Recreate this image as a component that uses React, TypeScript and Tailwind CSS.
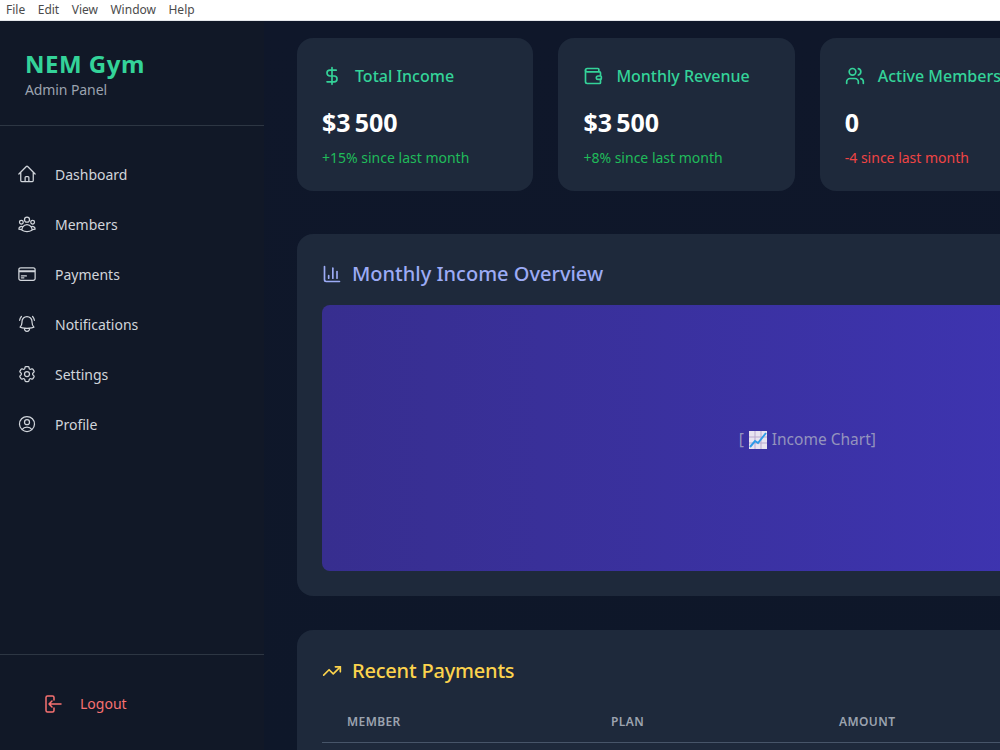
import React from 'react';
import { ChartColumn, DollarSign, TrendingUp, Users, Wallet } from 'lucide-react';
import {
  HiOutlineBellAlert,
  HiOutlineCog6Tooth,
  HiOutlineCreditCard,
  HiOutlineHome,
  HiOutlineUserCircle,
  HiOutlineUserGroup,
} from 'react-icons/hi2';

const menu = ['File', 'Edit', 'View', 'Window', 'Help'];

const nav = [
  { label: 'Dashboard', icon: HiOutlineHome },
  { label: 'Members', icon: HiOutlineUserGroup },
  { label: 'Payments', icon: HiOutlineCreditCard },
  { label: 'Notifications', icon: HiOutlineBellAlert },
  { label: 'Settings', icon: HiOutlineCog6Tooth },
  { label: 'Profile', icon: HiOutlineUserCircle },
];

const stats = [
  { title: 'Total Income', value: '$3\u202F500', note: '+15% since last month', icon: DollarSign, up: true },
  { title: 'Monthly Revenue', value: '$3\u202F500', note: '+8% since last month', icon: Wallet, up: true },
  { title: 'Active Members', value: '0', note: '-4 since last month', icon: Users, up: false },
];

// the chart emoji, no emoji font on the page
const ChartEmoji = () => (
  <svg viewBox="0 0 18 18" className="w-[18px] h-[18px] mx-[5px] shrink-0">
    <rect x="0" y="0" width="18" height="18" fill="#e8e3f0" />
    <path d="M0 6h18M0 12h18M6 0v18M12 0v18" stroke="#b9a9cf" strokeWidth="1" />
    <path d="M1 16L6 10l3 2 8-10" fill="none" stroke="#2f9be8" strokeWidth="2" />
  </svg>
);

const LogoutIcon = () => (
  <svg viewBox="0 0 17 18" fill="none" stroke="currentColor" strokeWidth="1.5" strokeLinecap="round" strokeLinejoin="round" className="w-[17px] h-[18px]">
    <path d="M9 5V2.5A1.5 1.5 0 0 0 7.5 1h-5A1.5 1.5 0 0 0 1 2.5v13A1.5 1.5 0 0 0 2.5 17h5A1.5 1.5 0 0 0 9 15.5V13" />
    <path d="M16 9H4M7 6L4 9l3 3" />
  </svg>
);

export default function App() {
  return (
    <div className="h-screen flex flex-col overflow-hidden font-['Noto_Sans','Open_Sans',sans-serif]">
      <div className="h-[21px] shrink-0 bg-white flex items-center gap-[12.5px] pl-[6px] pb-[1px] border-b border-gray-200 text-[12px] text-[#4b4b4b]">
        {menu.map((m) => (
          <span key={m}>{m}</span>
        ))}
      </div>

      <div className="flex-1 flex min-h-0">
        <aside className="w-[264px] shrink-0 bg-[#111827] flex flex-col">
          <div className="h-[105px] shrink-0 pl-[25px] pt-[27px] border-b border-[#2d3643]">
            <div className="text-[24px] leading-[32px] font-bold tracking-[0.5px] text-[#34d399]">NEM Gym</div>
            <div className="text-[14px] leading-[20px] tracking-[-0.1px] text-[#9ca3af]">Admin Panel</div>
          </div>

          <nav className="flex-1 flex flex-col pt-[23px]">
            {nav.map((item) => (
              <div key={item.label} className="h-[50px] flex items-center pl-[17px] gap-[18px] text-[14px] text-[#d1d5db]">
                <item.icon className="w-5 h-5" />
                <span>{item.label}</span>
              </div>
            ))}
          </nav>

          <div className="h-[96px] shrink-0 border-t border-[#2d3643] flex items-center pl-[45px] pt-[2px] gap-[18px] text-[14px] text-[#f87171]">
            <LogoutIcon />
            <span>Logout</span>
          </div>
        </aside>

        <main className="flex-1 min-w-0 overflow-hidden bg-gradient-to-b from-[#0f172a] to-[#0e1729] pl-[33px] pt-[17px]">
          <div className="w-[1020.5px]">
            <div className="grid grid-cols-4 gap-[25px]">
              {stats.map((s) => (
                <div key={s.title} className="h-[153px] rounded-2xl bg-[#1e293b] pl-[25px] pt-[25px]">
                  <div className="flex items-center gap-[13px] h-[26px] text-[16px] font-medium text-[#34d399]">
                    <s.icon className="w-5 h-5" />
                    <span className="whitespace-nowrap">{s.title}</span>
                  </div>
                  <div className="mt-[17px] text-[25px] leading-[32px] font-bold text-white">{s.value}</div>
                  <div className={`mt-[10px] text-[14px] leading-[20px] ${s.up ? 'text-[#20bb5a]' : 'text-[#ef4444]'}`}>{s.note}</div>
                </div>
              ))}
            </div>

            <section className="mt-[43px] h-[362px] rounded-2xl bg-[#1e293b] px-[25px] pt-[24px]">
              <div className="h-[32px] flex items-center gap-[10px] text-[20px] font-medium text-[#9cabf5]">
                <ChartColumn className="w-5 h-5" />
                <span>Monthly Income Overview</span>
              </div>
              <div className="mt-[15px] h-[266px] pt-[4px] rounded-lg bg-gradient-to-r from-[#372e8f] to-[#4036bd] flex items-center justify-center text-[15.5px] text-[#9494bd]">
                [<ChartEmoji /> Income Chart]
              </div>
            </section>

            <section className="mt-[34px] rounded-2xl bg-[#1e293b] px-[25px] pt-[25px] pb-8">
              <div className="h-[32px] flex items-center gap-[10px] text-[20px] font-medium tracking-[-0.2px] text-[#fcd34d]">
                <TrendingUp className="w-5 h-5" />
                <span>Recent Payments</span>
              </div>
              <div className="mt-[13px] h-[43px] pt-[2px] grid grid-cols-[264px_228px_1fr] items-center pl-[25px] border-b border-[#475569] text-[12px] font-semibold tracking-[0.4px] text-[#9ca3af]">
                <span>MEMBER</span>
                <span>PLAN</span>
                <span>AMOUNT</span>
              </div>
            </section>
          </div>
        </main>
      </div>
    </div>
  );
}
